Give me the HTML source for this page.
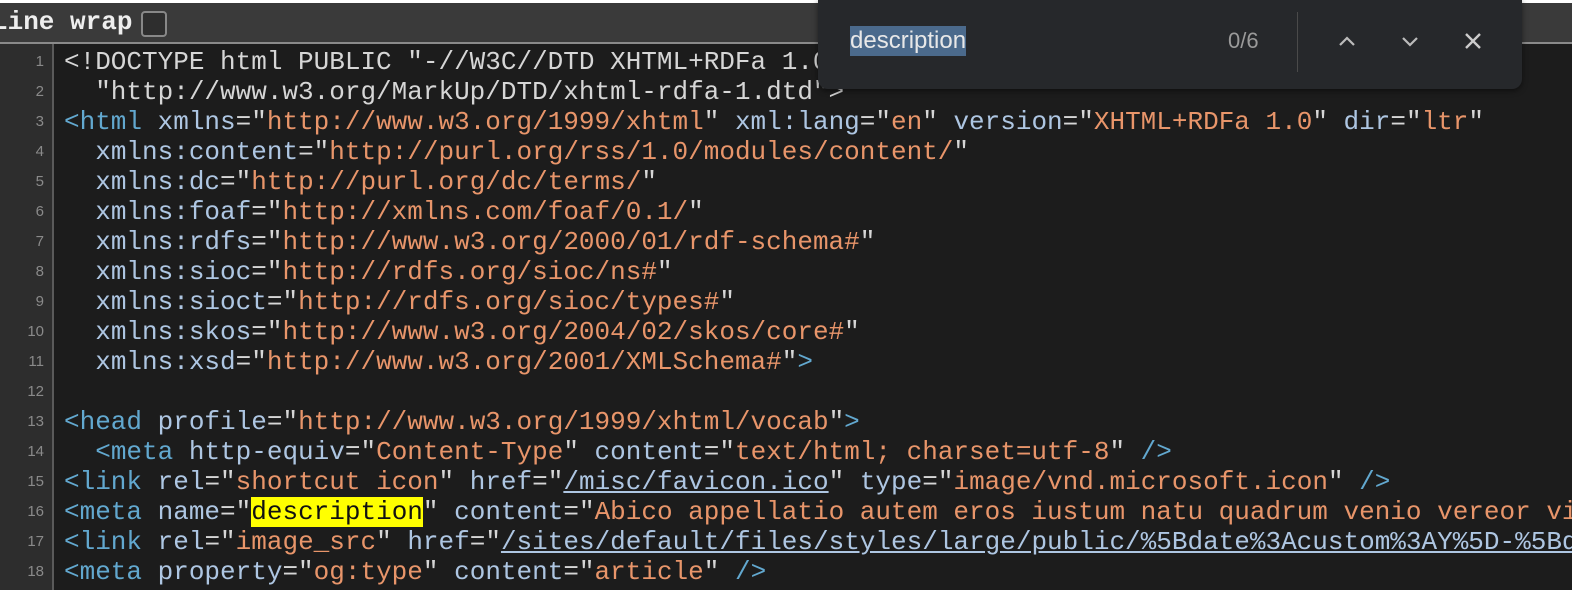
<!DOCTYPE html>
<html><head><style>
body{margin:0;width:1572px;height:590px;overflow:hidden;background:#1c1c1c;position:relative;font-family:"Liberation Mono",monospace}
.top{position:absolute;left:0;top:0;width:1572px;height:3px;background:#fff}
.bar{position:absolute;left:0;top:3px;width:1572px;height:39px;background:#3a3a3a;border-bottom:2px solid #8a8a8a}
.bar span{position:absolute;left:-8px;top:4px;font:bold 26px "Liberation Mono",monospace;color:#eee}
.cb{position:absolute;left:141px;top:8px;width:22px;height:22px;border:2px solid #888;border-radius:4px;background:#2e2e2e}
.gut{position:absolute;left:0;top:44px;width:52px;height:546px;background:#2d2d2d;border-right:2px solid #5a5a5a}
.code{position:absolute;left:0;top:47px;width:1572px}
.l{height:30px;line-height:30px;white-space:pre;font-size:26px;color:#d6d6d6;position:relative}
.n{position:absolute;left:0;width:44px;text-align:right;font:15px "Liberation Sans",sans-serif;color:#8a8a8a;line-height:30px}
.t{position:absolute;left:64px}
.g{color:#62a8cf}.a{color:#aec6e2}.s{color:#e8956a}.u{text-decoration:underline}
.hl{background:#ffff00;color:#111}
.find{position:absolute;left:818px;top:0;width:704px;height:89px;background:#26282b;border-radius:0 0 10px 10px;box-shadow:0 2px 6px rgba(0,0,0,.5);font-family:"Liberation Sans",sans-serif}
.q{position:absolute;left:32px;top:26px;font-size:24px;color:#e8e8e8;background:#4b6a8c;line-height:30px}
.c{position:absolute;left:410px;top:28px;font-size:22px;color:#9a9a9a}
.dv{position:absolute;left:479px;top:12px;width:1px;height:60px;background:#4a4a4a}
.find svg{position:absolute;top:30px}
</style></head><body>
<div class="top"></div>
<div class="bar"><span>Line wrap</span><div class="cb"></div></div>
<div class="gut"></div>
<div class="code">
<div class="l"><span class="n">1</span><span class="t">&lt;!DOCTYPE html PUBLIC "-//W3C//DTD XHTML+RDFa 1.0" </span></div>
<div class="l"><span class="n">2</span><span class="t">  "http://www.w3.org/MarkUp/DTD/xhtml-rdfa-1.dtd"&gt;</span></div>
<div class="l"><span class="n">3</span><span class="t"><span class="g">&lt;html</span> <span class="a">xmlns</span>="<span class="s">http://www.w3.org/1999/xhtml</span>" <span class="a">xml:lang</span>="<span class="s">en</span>" <span class="a">version</span>="<span class="s">XHTML+RDFa 1.0</span>" <span class="a">dir</span>="<span class="s">ltr</span>"</span></div>
<div class="l"><span class="n">4</span><span class="t">  <span class="a">xmlns:content</span>="<span class="s">http://purl.org/rss/1.0/modules/content/</span>"</span></div>
<div class="l"><span class="n">5</span><span class="t">  <span class="a">xmlns:dc</span>="<span class="s">http://purl.org/dc/terms/</span>"</span></div>
<div class="l"><span class="n">6</span><span class="t">  <span class="a">xmlns:foaf</span>="<span class="s">http://xmlns.com/foaf/0.1/</span>"</span></div>
<div class="l"><span class="n">7</span><span class="t">  <span class="a">xmlns:rdfs</span>="<span class="s">http://www.w3.org/2000/01/rdf-schema#</span>"</span></div>
<div class="l"><span class="n">8</span><span class="t">  <span class="a">xmlns:sioc</span>="<span class="s">http://rdfs.org/sioc/ns#</span>"</span></div>
<div class="l"><span class="n">9</span><span class="t">  <span class="a">xmlns:sioct</span>="<span class="s">http://rdfs.org/sioc/types#</span>"</span></div>
<div class="l"><span class="n">10</span><span class="t">  <span class="a">xmlns:skos</span>="<span class="s">http://www.w3.org/2004/02/skos/core#</span>"</span></div>
<div class="l"><span class="n">11</span><span class="t">  <span class="a">xmlns:xsd</span>="<span class="s">http://www.w3.org/2001/XMLSchema#</span>"<span class="g">&gt;</span></span></div>
<div class="l"><span class="n">12</span></div>
<div class="l"><span class="n">13</span><span class="t"><span class="g">&lt;head</span> <span class="a">profile</span>="<span class="s">http://www.w3.org/1999/xhtml/vocab</span>"<span class="g">&gt;</span></span></div>
<div class="l"><span class="n">14</span><span class="t">  <span class="g">&lt;meta</span> <span class="a">http-equiv</span>="<span class="s">Content-Type</span>" <span class="a">content</span>="<span class="s">text/html; charset=utf-8</span>" <span class="g">/&gt;</span></span></div>
<div class="l"><span class="n">15</span><span class="t"><span class="g">&lt;link</span> <span class="a">rel</span>="<span class="s">shortcut icon</span>" <span class="a">href</span>="<span class="a u">/misc/favicon.ico</span>" <span class="a">type</span>="<span class="s">image/vnd.microsoft.icon</span>" <span class="g">/&gt;</span></span></div>
<div class="l"><span class="n">16</span><span class="t"><span class="g">&lt;meta</span> <span class="a">name</span>="<span class="hl">description</span>" <span class="a">content</span>="<span class="s">Abico appellatio autem eros iustum natu quadrum venio vereor vicis</span></span></div>
<div class="l"><span class="n">17</span><span class="t"><span class="g">&lt;link</span> <span class="a">rel</span>="<span class="s">image_src</span>" <span class="a">href</span>="<span class="a u">/sites/default/files/styles/large/public/%5Bdate%3Acustom%3AY%5D-%5Bdate</span></span></div>
<div class="l"><span class="n">18</span><span class="t"><span class="g">&lt;meta</span> <span class="a">property</span>="<span class="s">og:type</span>" <span class="a">content</span>="<span class="s">article</span>" <span class="g">/&gt;</span></span></div>
</div>
<div class="find">
<span class="q">description</span>
<span class="c">0/6</span>
<div class="dv"></div>
<svg style="left:518px" width="22" height="22" viewBox="0 0 22 22"><path d="M4 15 L11 8 L18 15" fill="none" stroke="#bbb" stroke-width="2.2"/></svg>
<svg style="left:581px" width="22" height="22" viewBox="0 0 22 22"><path d="M4 8 L11 15 L18 8" fill="none" stroke="#bbb" stroke-width="2.2"/></svg>
<svg style="left:644px" width="22" height="22" viewBox="0 0 22 22"><path d="M4 4 L18 18 M18 4 L4 18" fill="none" stroke="#ccc" stroke-width="2.4"/></svg>
</div>
</body></html>
